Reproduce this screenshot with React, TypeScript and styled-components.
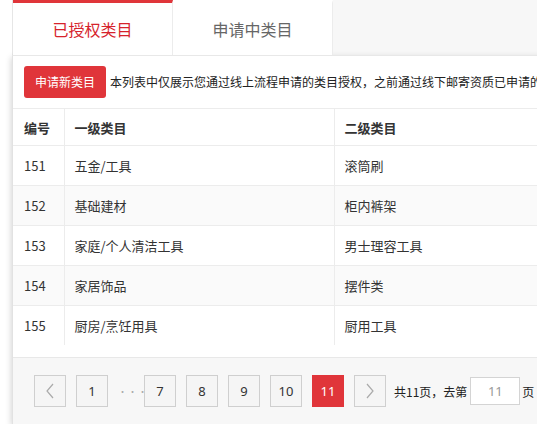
import styled, { createGlobalStyle } from 'styled-components';

const GlobalStyle = createGlobalStyle`
  html, body {
    margin: 0;
    padding: 0;
    background: #fff;
    overflow: hidden;
  }
  body {
    font-family: 'Noto Sans CJK SC', 'Noto Sans', sans-serif;
    color: #333;
  }
`;

const red = '#e0353a';

const Page = styled.div`
  margin-left: 12px;
  width: 640px;
`;

const TabBar = styled.div`
  display: flex;
  height: 55px;
  background: #f7f7f7;
  border-left: 1px solid #e6e6e6;
  box-sizing: border-box;
`;

const Tab = styled.div<{ $active?: boolean }>`
  width: 160px;
  display: flex;
  align-items: center;
  justify-content: center;
  box-sizing: border-box;
  background: #fff;
  border-top: 3px solid ${(p) => (p.$active ? red : '#fff')};
  border-right: 1px solid #ececec;
  font-size: 16px;
  color: ${(p) => (p.$active ? '#d6232c' : '#666')};
  padding-bottom: 1px;
`;

const Panel = styled.div`
  border-top: 1px solid #e8e8e8;
  border-left: 1px solid #e2e2e2;
  box-shadow: -1px 2px 6px rgba(0, 0, 0, 0.16);
  background: #fff;
`;

const Toolbar = styled.div`
  display: flex;
  align-items: center;
  gap: 4px;
  padding: 10px 11px;
  white-space: nowrap;
  overflow: hidden;
`;

const PrimaryButton = styled.button`
  height: 32px;
  padding: 0 11px;
  border: none;
  border-radius: 3px;
  background: ${red};
  color: #fff;
  font-family: inherit;
  font-size: 12px;
  line-height: 32px;
  flex-shrink: 0;
`;

const Notice = styled.span`
  font-size: 12px;
  color: #222;
  line-height: 16px;
`;

const Table = styled.table`
  border-collapse: collapse;
  width: 100%;
  font-size: 13px;
`;

const HeadCell = styled.th<{ $w?: number }>`
  height: 37px;
  padding: 0 10px;
  text-align: left;
  font-weight: bold;
  color: #333;
  border-top: 1px solid #ececec;
  border-bottom: 1px solid #ececec;
  border-right: 1px solid #ececec;
  width: ${(p) => (p.$w ? `${p.$w}px` : 'auto')};
  box-sizing: border-box;
  &:first-child {
    padding-left: 11px;
  }
`;

const Row = styled.tr<{ $alt?: boolean; $last?: boolean }>`
  background: ${(p) => (p.$alt ? '#fafafa' : '#fff')};
  td {
    border-bottom: ${(p) => (p.$last ? 'none' : '1px solid #ececec')};
  }
`;

const Cell = styled.td`
  height: 39px;
  padding: 0 10px;
  color: #333;
  border-right: 1px solid #ececec;
  &:first-child {
    padding-left: 11px;
  }
`;

const Spacer = styled.div`
  height: 12px;
`;

const Pager = styled.div`
  display: flex;
  align-items: center;
  gap: 10px;
  height: 66px;
  box-sizing: content-box;
  padding: 0 21px 0;
  background: #f7f7f7;
  border-top: 1px solid #e8e8e8;
  font-size: 13px;
`;

const PageButton = styled.div<{ $active?: boolean; $muted?: boolean }>`
  width: 32px;
  height: 32px;
  box-sizing: border-box;
  display: flex;
  align-items: center;
  justify-content: center;
  border: 1px solid ${(p) => (p.$active ? red : '#cfcfcf')};
  background: ${(p) => (p.$active ? red : '#f5f5f5')};
  color: ${(p) => (p.$active ? '#fff' : p.$muted ? '#aaa' : '#333')};
  font-family: 'Noto Sans', sans-serif;
  font-size: 13px;
`;

const Dots = styled.span`
  width: 16px;
  text-align: center;
  color: #aaa;
  letter-spacing: 1px;
  font-size: 9px;
`;

const Jump = styled.div`
  display: flex;
  align-items: center;
  gap: 2px;
  color: #222;
  font-size: 12px;
  margin-left: -2px;
`;

const PageInput = styled.input`
  width: 50px;
  height: 28px;
  box-sizing: border-box;
  border: 1px solid #d4d4d4;
  background: #fff;
  text-align: center;
  color: #999;
  font-family: 'Noto Sans', sans-serif;
  font-size: 13px;
  padding: 0;
  margin: 0 0 0 1px;
`;

const rows = [
  { id: 151, first: '五金/工具', second: '滚筒刷' },
  { id: 152, first: '基础建材', second: '柜内裤架' },
  { id: 153, first: '家庭/个人清洁工具', second: '男士理容工具' },
  { id: 154, first: '家居饰品', second: '摆件类' },
  { id: 155, first: '厨房/烹饪用具', second: '厨用工具' },
];

const Chevron = ({ dir }: { dir: 'left' | 'right' }) => (
  <svg width="10" height="16" viewBox="0 0 10 16">
    <path
      d={dir === 'left' ? 'M8 1 L2 8 L8 15' : 'M2 1 L8 8 L2 15'}
      fill="none"
      stroke="#aaa"
      strokeWidth="1.2"
    />
  </svg>
);

export default function App() {
  return (
    <>
      <GlobalStyle />
      <Page>
        <TabBar>
          <Tab $active>已授权类目</Tab>
          <Tab>申请中类目</Tab>
        </TabBar>
        <Panel>
          <Toolbar>
            <PrimaryButton>申请新类目</PrimaryButton>
            <Notice>
              本列表中仅展示您通过线上流程申请的类目授权，之前通过线下邮寄资质已申请的类目授权请联系客服查询
            </Notice>
          </Toolbar>
          <Table>
            <thead>
              <tr>
                <HeadCell $w={51}>编号</HeadCell>
                <HeadCell $w={270}>一级类目</HeadCell>
                <HeadCell>二级类目</HeadCell>
              </tr>
            </thead>
            <tbody>
              {rows.map((r, i) => (
                <Row key={r.id} $alt={i % 2 === 1} $last={i === rows.length - 1}>
                  <Cell>{r.id}</Cell>
                  <Cell>{r.first}</Cell>
                  <Cell>{r.second}</Cell>
                </Row>
              ))}
            </tbody>
          </Table>
          <Spacer />
          <Pager>
            <PageButton $muted>
              <Chevron dir="left" />
            </PageButton>
            <PageButton>1</PageButton>
            <Dots>···</Dots>
            {[7, 8, 9, 10].map((n) => (
              <PageButton key={n}>{n}</PageButton>
            ))}
            <PageButton $active>11</PageButton>
            <PageButton $muted>
              <Chevron dir="right" />
            </PageButton>
            <Jump>
              共11页，去第
              <PageInput defaultValue="11" />
              页
            </Jump>
          </Pager>
        </Panel>
      </Page>
    </>
  );
}
